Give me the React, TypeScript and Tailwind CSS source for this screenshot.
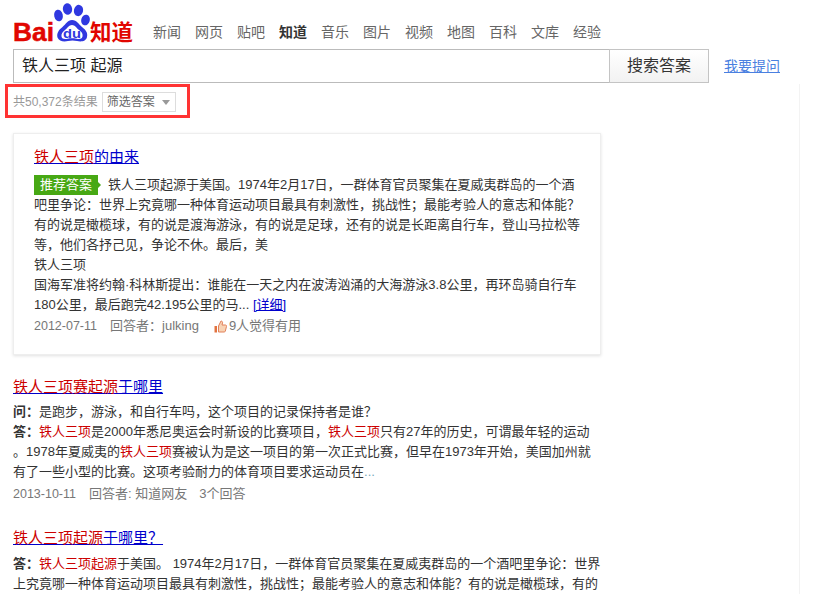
const font = '[font-family:"Liberation_Sans","Noto_Sans_CJK_SC",sans-serif]';

const nav = ['新闻', '网页', '贴吧', '知道', '音乐', '图片', '视频', '地图', '百科', '文库', '经验'];

function R({ children }: { children: React.ReactNode }) {
  return <span className="text-[#c00]">{children}</span>;
}

function Logo() {
  return (
    <svg width="122" height="48" viewBox="0 0 122 48" className="shrink-0 self-start">
      <text x="0" y="38" fill="#e10601" fontSize="26" fontWeight="700" stroke="#e10601" strokeWidth="0.500" fontFamily="Liberation Sans" textLength="41" lengthAdjust="spacingAndGlyphs">Bai</text>
      <g fill="#2f38e0">
        <ellipse cx="45.500" cy="12.500" rx="4.300" ry="5.800" transform="rotate(-12 45.500 12.500)" />
        <ellipse cx="54.500" cy="6" rx="4.600" ry="5.800" transform="rotate(-8 54.500 6)" />
        <ellipse cx="65.500" cy="7.500" rx="4.600" ry="5.700" transform="rotate(10 65.500 7.500)" />
        <ellipse cx="72.500" cy="17" rx="4.300" ry="5.400" transform="rotate(15 72.500 17)" />
        <path d="M59 17c5 0 6.500 4 10 7 4 3 6 6 5 10-1 4.500-6 5-10 4-3-.8-6-.8-9 0-4 1-9 .5-10.500-3.500-1-4 1-7.500 5-10.500 3.500-3 5-7 9.500-7z" />
      </g>
      <path d="M59 22c3 0 4.500 3 7 5 3 2 4 4 3.500 6.500-.7 2.500-3 2.800-6 2.200-3-.6-6-.6-9 0-3 .6-5.500.3-6-2.200-.5-2.500 1-4.500 3.500-6.500 2.500-2 4-5 7-5z" fill="#fff" />
      <text x="50" y="35" fill="#2f38e0" fontSize="13" fontWeight="700" fontFamily="Liberation Sans" textLength="18" lengthAdjust="spacingAndGlyphs">du</text>
      <text x="77" y="37" fill="#e10601" fontSize="21.500" fontWeight="700" fontFamily="Noto Sans CJK SC">知道</text>
    </svg>
  );
}

function Thumb() {
  return (
    <svg width="13" height="13" viewBox="0 0 13 13" className="shrink-0">
      <path d="M.5 6H3v6.500H.5z" fill="#e2733f" />
      <path d="M4.500 6 7 1c1.200 0 1.800 1 1.500 2L8 5h3.500c.8 0 1.200.7 1 1.400l-1.200 4.800c-.2.5-.6.8-1.100.8H4.500z" fill="#f8d3b4" stroke="#e2805a" strokeWidth="1" />
    </svg>
  );
}

export default function App() {
  return (
    <div className={`${font} w-[813px] h-[594px] overflow-hidden bg-white text-[#333] text-[13px]`}>
      <header className="pl-[13px] pt-[3px]">
        <div className="flex items-end h-[40px]">
          <Logo />
          <nav className="ml-[18px] flex gap-[14px] text-[14px] leading-[20px] text-[#666] pb-[1px]">
            {nav.map((n) => (
              <span key={n} className={n === '知道' ? 'font-bold text-[#333]' : ''}>{n}</span>
            ))}
          </nav>
        </div>
        <div className="flex items-center mt-[6px]">
          <div className="w-[596px] h-[34px] border border-[#bbb] border-r-0 pl-[8px] text-[16px] leading-[32px] text-[#222]">铁人三项 起源</div>
          <div className="w-[100px] h-[34px] border border-[#c4c4c4] bg-gradient-to-b from-white to-[#f2f2f2] text-center text-[16px] leading-[32px] text-[#333]">搜索答案</div>
          <a className="ml-[15px] text-[14px] text-[#4a80e0] underline">我要提问</a>
        </div>
      </header>

      <div className="w-[800px] h-[511px] mt-[1px] border-r border-[#f3f3f3]">
        <div className="ml-[5px] w-[185px] h-[34px] border-[3px] border-[#f33] flex items-center pl-[5px] pt-[2px] text-[12px]">
          <span className="text-[#999] whitespace-nowrap">共50,372条结果</span>
          <span className="ml-[4px] w-[74px] h-[20px] border border-[#ddd] flex items-center pl-[4px] text-[#666] shrink-0 whitespace-nowrap">
            筛选答案
            <span className="ml-[7px] border-x-[4px] border-x-transparent border-t-[5px] border-t-[#999]" />
          </span>
        </div>

        <section className="ml-[13px] mt-[15px] w-[588px] h-[222px] border border-[#eee] shadow-[0_1px_3px_rgba(0,0,0,0.12)] pl-[20px] pt-[12px] whitespace-nowrap">
          <h3 className="text-[15px] leading-[22px] text-[#00c] underline"><R>铁人三项</R>的由来</h3>
          <div className="mt-[7px] leading-[20px] text-[13px]">
            <div className="flex items-center">
              <span className="relative mr-[10px] w-[64px] h-[20px] bg-[#47a814] text-white text-center leading-[20px]">
                推荐答案
                <span className="absolute left-full top-[7px] border-y-[3px] border-y-transparent border-l-[3px] border-l-[#47a814]" />
              </span>
              铁人三项起源于美国。1974年2月17日，一群体育官员聚集在夏威夷群岛的一个酒
            </div>
            <div>吧里争论：世界上究竟哪一种体育运动项目最具有刺激性，挑战性；最能考验人的意志和体能？</div>
            <div>有的说是橄榄球，有的说是渡海游泳，有的说是足球，还有的说是长距离自行车，登山马拉松等</div>
            <div>等，他们各抒己见，争论不休。最后，美</div>
            <div>铁人三项</div>
            <div>国海军准将约翰·科林斯提出：谁能在一天之内在波涛汹涌的大海游泳3.8公里，再环岛骑自行车</div>
            <div>180公里，最后跑完42.195公里的马... <span className="text-[#00c] underline">[详细]</span></div>
          </div>
          <div className="mt-[1px] flex items-center leading-[20px] text-[#777]">
            <span className="text-[12.500px]">2012-07-11</span>
            <span className="ml-[13px]">回答者：julking</span>
            <span className="ml-[15px] mr-[2px]"><Thumb /></span>
            <span>9人觉得有用</span>
          </div>
        </section>

        <section className="ml-[13px] mt-[21px] whitespace-nowrap">
          <h3 className="text-[15px] leading-[22px] text-[#00c] underline"><R>铁人三项赛起源</R>于哪里</h3>
          <div className="mt-[4px] leading-[20px]">
            <div><b>问：</b>是跑步，游泳，和自行车吗，这个项目的记录保持者是谁？</div>
            <div><b>答：</b><R>铁人三项</R>是2000年悉尼奥运会时新设的比赛项目，<R>铁人三项</R>只有27年的历史，可谓最年轻的运动</div>
            <div>。1978年夏威夷的<R>铁人三项</R>赛被认为是这一项目的第一次正式比赛，但早在1973年开始，美国加州就</div>
            <div>有了一些小型的比赛。这项考验耐力的体育项目要求运动员在<span className="text-[#7ab]">...</span></div>
          </div>
          <div className="mt-[2px] leading-[20px] text-[#777]">
            <span className="text-[12.500px]">2013-10-11</span>
            <span className="ml-[13px]">回答者: 知道网友</span>
            <span className="ml-[12px]">3个回答</span>
          </div>
        </section>

        <section className="ml-[13px] mt-[23px] whitespace-nowrap">
          <h3 className="text-[15px] leading-[22px] text-[#00c] underline"><R>铁人三项起源</R>于哪里？</h3>
          <div className="mt-[5px] leading-[20px]">
            <div><b>答：</b><R>铁人三项起源</R>于美国。 1974年2月17日，一群体育官员聚集在夏威夷群岛的一个酒吧里争论：世界</div>
            <div>上究竟哪一种体育运动项目最具有刺激性，挑战性；最能考验人的意志和体能？有的说是橄榄球，有的</div>
          </div>
        </section>
      </div>
    </div>
  );
}
